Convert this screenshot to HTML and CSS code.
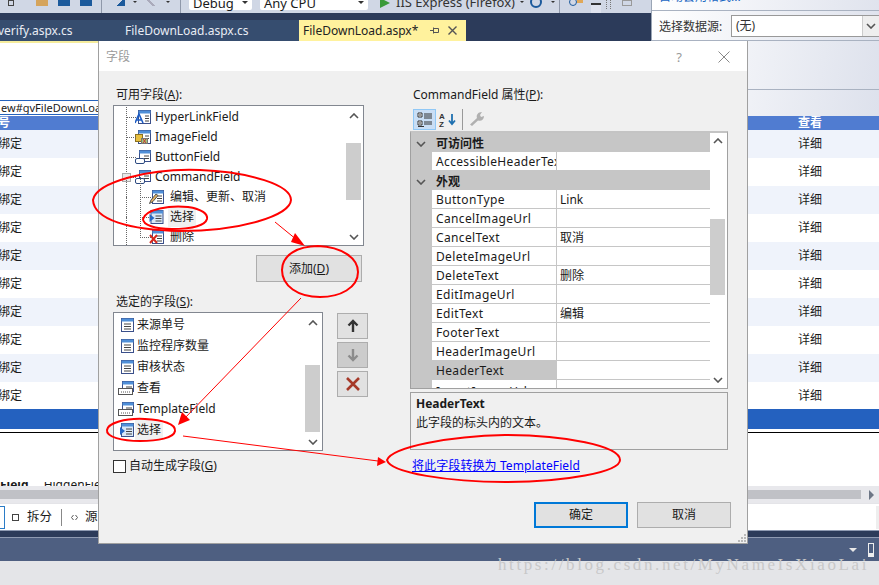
FILE: index.html
```html
<!DOCTYPE html>
<html lang="zh">
<head>
<meta charset="utf-8">
<title>字段</title>
<link rel="stylesheet" href="styles.css">
</head>
<body>
<svg class="defs" width="0" height="0">
  <defs>
    <symbol id="doc" viewBox="0 0 14 14"><rect x="1.5" y="0.5" width="12" height="13" fill="#fff" stroke="#3a4f8a"/><rect x="1.5" y="0.5" width="12" height="3" fill="#4f8fd8"/><path d="M4 6h7M4 8.5h7M4 11h7" stroke="#444"/></symbol>
    <symbol id="link" viewBox="0 0 16 14"><rect x="3.5" y="0.5" width="12" height="13" fill="#fff" stroke="#3a4f8a"/><rect x="3.5" y="0.5" width="12" height="3" fill="#4f8fd8"/><path d="M10 6h4M10 8.5h4M10 11h4" stroke="#444"/><path d="M0 13 4 4l4 9M2 10h4" fill="none" stroke="#1c5cc4" stroke-width="1.6"/></symbol>
    <symbol id="image" viewBox="0 0 16 14"><rect x="3.5" y="0.5" width="12" height="13" fill="#fff" stroke="#3a4f8a"/><rect x="3.5" y="0.5" width="12" height="3" fill="#4f8fd8"/><path d="M10 6h4M10 8.5h4" stroke="#444"/><rect x="0.5" y="4.5" width="7" height="7" fill="#e8c040" stroke="#8a7020"/><rect x="6.5" y="8.5" width="6" height="5" fill="#9fc77a" stroke="#777"/><path d="m8 9 3 4m0-4-3 4" stroke="#c33"/></symbol>
    <symbol id="btn" viewBox="0 0 16 14"><rect x="4.5" y="0.5" width="11" height="11" fill="#fff" stroke="#3a4f8a"/><rect x="4.5" y="0.5" width="11" height="3" fill="#4f8fd8"/><path d="M9 6h5M9 8.5h5" stroke="#444"/><rect x="0.5" y="8.5" width="9" height="5" rx="1.5" fill="#fff" stroke="#2c4a80"/></symbol>
    <symbol id="edit" viewBox="0 0 15 14"><rect x="3.5" y="0.5" width="11" height="13" fill="#fff" stroke="#3a4f8a"/><rect x="3.5" y="0.5" width="11" height="3" fill="#4f8fd8"/><path d="M8 6h5M8 8.5h5M8 11h5" stroke="#444"/><path d="M0.5 13.5 2 10l5-6 2 1.500-5 6z" fill="#e0b060" stroke="#555"/></symbol>
    <symbol id="sel" viewBox="0 0 14 14"><rect x="1.500" y="0.5" width="12" height="13" fill="#d8e8f8" stroke="#3a4f8a"/><rect x="1.500" y="0.5" width="12" height="3" fill="#4f8fd8"/><path d="M6 6h6M6 8.500h6M6 11h6" stroke="#444"/><path d="M0 4v8l5-4z" fill="#2468c8"/></symbol>
    <symbol id="del" viewBox="0 0 15 14"><rect x="3.500" y="0.5" width="11" height="13" fill="#fff" stroke="#3a4f8a"/><rect x="3.500" y="0.5" width="11" height="3" fill="#4f8fd8"/><path d="M8 6h5M8 8.500h5M8 11h5" stroke="#444"/><path d="m1 5 7 8m0-8-7 8" stroke="#d8281c" stroke-width="2"/></symbol>
    <symbol id="tpl" viewBox="0 0 16 14"><rect x="4.500" y="0.5" width="11" height="10" fill="#fff" stroke="#3a4f8a"/><rect x="4.500" y="0.5" width="11" height="3" fill="#4f8fd8"/><path d="M8 6h6" stroke="#444"/><rect x="0.5" y="7.500" width="14" height="6" fill="#fff" stroke="#555"/><path d="M3 11h1m1 0h1m1 0h1m1 0h1m1 0h1" stroke="#555"/></symbol>
    <symbol id="up" viewBox="0 0 10 6"><path d="m1 5 4-4 4 4" fill="none" stroke="#555" stroke-width="1.600"/></symbol>
    <symbol id="down" viewBox="0 0 10 6"><path d="m1 1 4 4 4-4" fill="none" stroke="#555" stroke-width="1.600"/></symbol>
  </defs>
</svg>

<div class="ide">
  <header class="toolbar">
    <span class="t-box"></span>
    <span class="t-folder"></span>
    <span class="t-save"></span>
    <span class="t-save t-save2"></span>
    <span class="t-sep"></span>
    <span class="t-arrow"></span>
    <span class="t-caret"></span>
    <span class="t-gray"></span>
    <span class="t-caret"></span>
    <span class="t-sep t-sep2"></span>
    <span class="t-combo t-debug">Debug<i></i></span>
    <span class="t-combo t-cpu">Any CPU<i></i></span>
    <span class="t-play"></span>
    <span class="t-run">IIS Express (Firefox)</span>
    <span class="t-caret t-caret2"></span>
    <span class="t-refresh"></span>
    <span class="t-caret t-caret3"></span>
    <span class="t-sep t-sep3"></span>
    <span class="t-find"></span>
    <span class="t-orange"></span>
    <span class="t-more"></span>
    <span class="t-dots"></span>
    <span class="t-grid"></span>
  </header>
  <nav class="tabs">
    <div class="tab tab-a">verify.aspx.cs</div>
    <div class="tab tab-b">FileDownLoad.aspx.cs</div>
    <div class="tab tab-active">FileDownLoad.aspx*<svg class="tab-pin" width="9" height="9" viewBox="0 0 9 9"><path d="M0 4.500h3M3.500 1.500v6M3.500 2.500h5M3.500 6.500h5M8.500 2.500v4" fill="none" stroke="#555"/></svg><svg class="tab-x" width="9" height="9" viewBox="0 0 9 9"><path d="m.5.5 8 8m0-8-8 8" stroke="#555" stroke-width="1.400"/></svg></div>
  </nav>
  <main class="design">
    <div class="crumb">ew#gvFileDownLoad</div>
    <div class="gv">
      <div class="gv-head"><span class="c1">号</span><span class="c2">查看</span></div>
      <div class="gv-row alt"><span class="c1">绑定</span><span class="c2">详细</span></div>
      <div class="gv-row"><span class="c1">绑定</span><span class="c2">详细</span></div>
      <div class="gv-row alt"><span class="c1">绑定</span><span class="c2">详细</span></div>
      <div class="gv-row"><span class="c1">绑定</span><span class="c2">详细</span></div>
      <div class="gv-row alt"><span class="c1">绑定</span><span class="c2">详细</span></div>
      <div class="gv-row"><span class="c1">绑定</span><span class="c2">详细</span></div>
      <div class="gv-row alt"><span class="c1">绑定</span><span class="c2">详细</span></div>
      <div class="gv-row"><span class="c1">绑定</span><span class="c2">详细</span></div>
      <div class="gv-row alt"><span class="c1">绑定</span><span class="c2">详细</span></div>
      <div class="gv-row"><span class="c1">绑定</span><span class="c2">详细</span></div>
      <div class="gv-sel"></div>
    </div>
    <div class="gv-rule"></div>
    <div class="fields"><b>Field</b> HiddenField</div>
  </main>
  <div class="hscroll"><div class="hthumb"></div><span class="harrow"></span></div>
  <div class="viewbar">
    <span class="v-design"></span>
    <span class="v-icon"></span><span class="v-text">拆分</span>
    <span class="v-sep"></span>
    <svg class="v-code" width="7" height="7" viewBox="0 0 7 7"><path d="M2.500 1 .5 3.500l2 2.500M4.500 1l2 2.500-2 2.500" fill="none" stroke="#555"/></svg><span class="v-text">源</span>
    <span class="v-end"></span>
  </div>
  <div class="darkline"></div>
  <div class="panelbar"><span class="p-caret"></span><span class="p-pin"></span></div>
  <div class="wmstrip"></div>
</div>

<aside class="smart">
  <div class="smart-top"><span class="smart-link">自动套用格式...</span></div>
  <div class="smart-row"><span class="smart-label">选择数据源:</span><div class="smart-combo"><span>(无)</span><span class="smart-btn"><svg width="10" height="6"><use href="#down"/></svg></span></div></div>
  <div class="smart-rest"></div>
</aside>

<section class="dialog">
  <div class="dlg-title"><span>字段</span><span class="dlg-help">?</span><svg class="dlg-x" width="12" height="12" viewBox="0 0 12 12"><path d="m.5.5 11 11m0-11-11 11" stroke="#888" fill="none"/></svg></div>
  <div class="dlg-body">
    <div class="col-left">
      <label class="lbl">可用字段(<u>A</u>):</label>
      <div class="listbox avail">
        <div class="tree">
          <div class="node"><svg class="ic" width="16" height="14"><use href="#link"/></svg>HyperLinkField</div>
          <div class="node"><svg class="ic" width="16" height="14"><use href="#image"/></svg>ImageField</div>
          <div class="node"><svg class="ic" width="16" height="14"><use href="#btn"/></svg>ButtonField</div>
          <div class="node open"><span class="minus"></span><svg class="ic" width="16" height="14"><use href="#btn"/></svg>CommandField</div>
          <div class="node child"><svg class="ic" width="15" height="14"><use href="#edit"/></svg>编辑、更新、取消</div>
          <div class="node child"><svg class="ic" width="15" height="14"><use href="#sel"/></svg><span class="hl">选择</span></div>
          <div class="node child"><svg class="ic" width="15" height="14"><use href="#del"/></svg>删除</div>
        </div>
        <div class="sb"><svg width="10" height="6"><use href="#up"/></svg><div class="sb-track"><div class="sb-thumb t1"></div></div><svg width="10" height="6"><use href="#down"/></svg></div>
      </div>
      <button class="btn add">添加(<u>D</u>)</button>
      <label class="lbl lbl2">选定的字段(<u>S</u>):</label>
      <div class="sel-wrap">
        <div class="listbox chosen">
          <div class="items">
            <div class="item"><svg width="14" height="14"><use href="#doc"/></svg>来源单号</div>
            <div class="item"><svg width="14" height="14"><use href="#doc"/></svg>监控程序数量</div>
            <div class="item"><svg width="14" height="14"><use href="#doc"/></svg>审核状态</div>
            <div class="item"><svg class="wide" width="16" height="14"><use href="#tpl"/></svg>查看</div>
            <div class="item"><svg class="wide" width="16" height="14"><use href="#tpl"/></svg>TemplateField</div>
            <div class="item"><svg width="14" height="14"><use href="#sel"/></svg><span class="hl">选择</span></div>
          </div>
          <div class="sb"><svg width="10" height="6"><use href="#up"/></svg><div class="sb-track"><div class="sb-thumb t2"></div></div><svg width="10" height="6"><use href="#down"/></svg></div>
        </div>
        <div class="side">
          <button class="sq"><svg width="12" height="14" viewBox="0 0 12 14"><path d="M6 13V2M1.500 6.500 6 2l4.500 4.500" fill="none" stroke="#333" stroke-width="2.400"/></svg></button>
          <button class="sq off"><svg width="12" height="14" viewBox="0 0 12 14"><path d="M6 1v11M1.500 7.500 6 12l4.500-4.500" fill="none" stroke="#8c8c8c" stroke-width="2.400"/></svg></button>
          <button class="sq"><svg width="14" height="14" viewBox="0 0 14 14"><path d="m1 1 12 12m0-12L1 13" stroke="#a63a2a" stroke-width="2.600"/></svg></button>
        </div>
      </div>
      <label class="check"><span class="box"></span>自动生成字段(<u>G</u>)</label>
    </div>
    <div class="col-right">
      <label class="lbl rlbl">CommandField 属性(<u>P</u>):</label>
      <div class="pg-tools">
        <span class="pg-on"><svg width="16" height="15" viewBox="0 0 16 15"><path d="M1 1h4v4H1zM1 9h4v4H1z" fill="#fff" stroke="#333"/><path d="M2 3h2M2 11h2" stroke="#333"/><path d="M7 2h8M7 4h8M7 6h8M7 10h8M7 12h8M1 14.500h6" stroke="#333"/></svg></span>
        <span class="pg-az"><svg width="18" height="15" viewBox="0 0 18 15"><text x="0" y="7" class="az">A</text><text x="0" y="14.500" class="az">Z</text><path d="M13 2v10M10 8.500l3 3.500 3-3.500" fill="none" stroke="#1e70b0" stroke-width="1.800"/></svg></span>
        <span class="pg-sep"></span>
        <svg width="16" height="16" viewBox="0 0 16 16"><path d="M1 13.500 8 7c-1-3 1-6 5-6l-2 3 1 2 3-1c0 4-3 5.500-6 4.500L3 15z" fill="#b0b0b0"/></svg>
      </div>
      <div class="pg">
        <div class="pg-list">
          <div class="pg-cat"><svg width="10" height="6"><use href="#down"/></svg><span>可访问性</span></div>
          <div class="pg-row"><span class="n">AccessibleHeaderText</span><span class="v"></span></div>
          <div class="pg-cat"><svg width="10" height="6"><use href="#down"/></svg><span>外观</span></div>
          <div class="pg-row"><span class="n">ButtonType</span><span class="v">Link</span></div>
          <div class="pg-row"><span class="n">CancelImageUrl</span><span class="v"></span></div>
          <div class="pg-row"><span class="n">CancelText</span><span class="v">取消</span></div>
          <div class="pg-row"><span class="n">DeleteImageUrl</span><span class="v"></span></div>
          <div class="pg-row"><span class="n">DeleteText</span><span class="v">删除</span></div>
          <div class="pg-row"><span class="n">EditImageUrl</span><span class="v"></span></div>
          <div class="pg-row"><span class="n">EditText</span><span class="v">编辑</span></div>
          <div class="pg-row"><span class="n">FooterText</span><span class="v"></span></div>
          <div class="pg-row"><span class="n">HeaderImageUrl</span><span class="v"></span></div>
          <div class="pg-row cur"><span class="n">HeaderText</span><span class="v"></span></div>
          <div class="pg-row last"><span class="n">InsertImageUrl</span><span class="v"></span></div>
        </div>
        <div class="sb pg-sb"><svg width="10" height="6"><use href="#up"/></svg><div class="sb-track"><div class="sb-thumb t3"></div></div><svg width="10" height="6"><use href="#down"/></svg></div>
      </div>
      <div class="help"><b>HeaderText</b><span>此字段的标头内的文本。</span></div>
      <a class="conv" href="#">将此字段转换为 TemplateField</a>
      <div class="actions">
        <button class="btn ok">确定</button>
        <button class="btn cancel">取消</button>
      </div>
    </div>
  </div>
  <svg class="grip" width="8" height="8" viewBox="0 0 8 8"><path d="M6 0h2v2H6zM3 3h2v2H3zM6 3h2v2H6zM0 6h2v2H0zM3 6h2v2H3zM6 6h2v2H6z" fill="#b8b8b8"/></svg>
</section>

<svg class="marks" width="879" height="585" viewBox="0 0 879 585">
  <g fill="none" stroke="#f00" stroke-width="2">
    <path d="M93 200C96 182 150 168 200 170C250 172 291 185 291 200C290 216 240 231 180 231C130 230 94 220 93 200Z"/>
    <path d="M143 219C146 209 170 205 188 207C202 209 208 214 207 219C205 226 190 229 172 229C155 229 143 225 143 219Z"/>
    <path d="M282 270C282 255 298 246 318 246C342 247 358 258 358 272C358 288 340 297 320 297C298 297 282 286 282 270Z"/>
    <path d="M107 430C108 423 125 418 145 419C163 420 176 424 175 431C174 438 158 441 140 441C122 441 106 437 107 430Z"/>
    <path d="M387 460C392 447 450 436 505 435C565 435 620 446 620 460C620 472 565 482 505 482C450 482 390 473 387 460Z"/>
  </g>
  <g fill="none" stroke="#f00" stroke-width="1">
    <path d="M275 222 297 240"/>
    <path d="M301 298 183 420"/>
    <path d="M183 436 378 461"/>
  </g>
  <g fill="#f00">
    <path d="M305 246 295 233 291 242Z"/>
    <path d="M178 425 190 420 182 412Z"/>
    <path d="M386 462 378 457 377 466Z"/>
  </g>
</svg>
<div class="wm">https://blog.csdn.net/MyNameIsXiaoLai</div>
</body>
</html>
```
FILE: styles.css
```css
* { box-sizing: border-box; }
html, body { margin: 0; padding: 0; }
body { width: 879px; height: 585px; position: relative; overflow: hidden; font: 12px/16px "Noto Sans", "Noto Sans CJK SC", sans-serif; color: #1a1a1a; background: #fff; }
.defs { position: absolute; }
.ide { display: flex; flex-direction: column; height: 585px; }

.toolbar { height: 13px; background: #d0d7e5; display: flex; align-items: flex-start; overflow: hidden; position: relative; flex: none; padding-left: 8px; }
.t-box { width: 6px; height: 6px; border: 1px solid #444; margin-right: 22px; }
.t-folder { width: 12px; height: 6px; background: #d5a45c; margin-right: 10px; }
.t-save { width: 12px; height: 6px; background: #1c5a9c; margin-right: 10px; }
.t-save2 { margin-right: 9px; }
.t-sep { width: 1px; height: 13px; background: #8f98aa; margin-right: 11px; }
.t-arrow { width: 12px; height: 6px; background: linear-gradient(135deg, transparent 50%, #1c5a9c 50%); margin-right: 8px; }
.t-caret { width: 0; height: 0; border: 2.500px solid transparent; border-top-color: #333; margin: 1px 9px 0 0; }
.t-gray { width: 10px; height: 6px; background: linear-gradient(45deg, transparent 40%, #aab 40%, #aab 60%, transparent 60%); margin-right: 10px; }
.t-sep2 { margin-right: 8px; margin-left: 1px; }
.t-combo { height: 10px; background: #fff; border-radius: 0 0 2px 2px; padding-left: 4px; line-height: 6px; font-size: 13px; display: flex; justify-content: space-between; position: relative; }
.t-combo i { width: 0; height: 0; border: 3px solid transparent; border-top-color: #333; margin: 1px 4px 0 0; }
.t-debug { width: 63px; margin-right: 8px; }
.t-cpu { width: 108px; margin-right: 12px; }
.t-play { width: 0; height: 0; border-left: 10px solid #3a9a3a; border-top: 5px solid transparent; border-bottom: 5px solid transparent; margin-right: 6px; margin-top: -2px; }
.t-run { font-size: 13px; line-height: 4px; width: 121px; color: #333; }
.t-caret2 { margin-left: 3px; margin-right: 6px; }
.t-refresh { width: 12px; height: 12px; border-radius: 50%; border: 2px solid #1c5a9c; margin: -4px 9px 0 0; }
.t-caret3 { margin-right: 4px; }
.t-sep3 { margin-right: 9px; }
.t-find { width: 8px; height: 8px; border: 1.500px solid #1c5a9c; border-radius: 50%; margin-top: -2px; }
.t-orange { width: 6px; height: 3px; background: #e0a858; margin-right: 8px; }
.t-more { width: 10px; height: 13px; border-top: 2px solid #333; margin: 3px 5px 0 0; position: relative; background: #dfe3ee; }
.t-dots { width: 5px; height: 9px; border-left: 1px dotted #777; margin-right: 11px; border-right: 1px dotted #777; }
.t-grid { width: 10px; height: 6px; border: 1px solid #999; }

.tabs { height: 28px; background: #2c3b5a; display: flex; padding-top: 7px; color: #e8ecf4; flex: none; }
.tab { height: 21px; line-height: 21px; }
.tab-a { width: 125px; background: #364d6f; text-indent: -2px; white-space: nowrap; }
.tab-b { width: 174px; background: #364d6f; }
.tab-active { width: 167px; background: #fff29d; color: #222; padding-left: 4px; display: flex; align-items: center; white-space: nowrap; }
.tab-pin { margin-left: 12px; flex: none; }
.tab-x { margin-left: 9px; flex: none; }

.design { flex: none; height: 445px; background: #fff; border-top: 2px solid #f5ec9c; padding-top: 58px; position: relative; overflow: hidden; }
.crumb { position: absolute; left: 0; top: 57px; width: 100px; height: 15px; border: 1px solid #2563bc; border-left: 0; background: #fff; line-height: 13px; font-size: 11px; padding-left: 1px; white-space: nowrap; overflow: hidden; }
.gv { margin-top: 15px; }
.gv-head { height: 14px; background: #507cd1; color: #fff; font-weight: 700; display: flex; line-height: 14px; overflow: hidden; }
.gv-row { height: 28px; background: #fff; display: flex; align-items: center; }
.alt { background: #eff3fb; }
.c1 { width: 800px; margin-left: -2px; flex: none; }
.gv-sel { height: 20px; background: #2461bf; margin-top: -1px; }
.gv-rule { height: 1px; background: #000; margin-top: 3px; }
.fields { margin-top: 49px; height: 6px; line-height: 0; white-space: nowrap; padding-top: 3px; overflow: hidden; }
.fields b { margin-right: 12px; }

.hscroll { height: 17px; background: #e8e8ec; flex: none; display: flex; align-items: center; padding-right: 13px; }
.hthumb { height: 9px; background: #c0c1c6; flex: 1; }
.harrow { width: 0; height: 0; border-left: 5px solid #6d7686; border-top: 5px solid transparent; border-bottom: 5px solid transparent; margin-left: 8px; margin-right: -8px; }
.viewbar { height: 27px; background: #fff; flex: none; display: flex; align-items: center; border-top: 1px solid #e4e4e8; }
.v-design { width: 5px; height: 23px; border: 1px solid #2b7cc7; border-left: 0; margin-right: 7px; }
.v-icon { width: 7px; height: 7px; border: 1px solid #444; margin-right: 8px; }
.v-text { font-size: 12.500px; }
.v-sep { width: 1px; height: 17px; background: #888; margin: 0 9px; }
.v-code { margin-right: 7px; flex: none; }
.v-end { width: 3px; height: 23px; background: #eee; margin-left: auto; }
.darkline { height: 8px; background: #2c3b5a; border-top: 1px solid #8e9ab2; border-bottom: 1px solid #8e9ab2; flex: none; }
.panelbar { height: 23px; background: #4e5f81; flex: none; display: flex; justify-content: flex-end; align-items: center; padding-right: 5px; }
.p-caret { width: 0; height: 0; border: 4px solid transparent; border-top-color: #e8e8e8; margin: 4px 11px 0 0; }
.p-pin { width: 6px; height: 14px; border: 1.500px solid #eee; border-bottom-width: 4px; }
.wmstrip { flex: 1; background: #e4e5e8; }

.smart { position: absolute; left: 651px; top: 0; width: 228px; height: 116px; background: linear-gradient(100deg, #fff, #dde1ec); border-left: 1px solid #9aa5b5; overflow: hidden; }
.smart-top { height: 11px; border-bottom: 1px solid #a9b2c1; line-height: 0; padding-left: 7px; color: #1a66c2; }
.smart-link { position: relative; top: -3px; display: block; line-height: 0; }
.smart-row { height: 30px; display: flex; align-items: center; padding-left: 7px; border-bottom: 1px solid #a9b2c1; color: #333; }
.smart-label { width: 72px; flex: none; white-space: nowrap; padding-top: 2px; }
.smart-combo { width: 149px; height: 22px; background: #fff; border: 1px solid #999; display: flex; justify-content: space-between; align-items: center; padding-left: 4px; flex: none; }
.smart-btn { width: 17px; height: 20px; background: #eee; border-left: 1px solid #ccc; display: flex; align-items: center; justify-content: center; }
.smart-rest { height: 49px; border-bottom: 1px solid #a9b2c1; }

.dialog { position: absolute; left: 98px; top: 41px; width: 650px; height: 503px; background: #f0f0f0; border: 1px solid #a0a0a0; border-top: 0; display: flex; flex-direction: column; }
.dlg-title { height: 30px; background: #fff; flex: none; display: flex; align-items: center; padding: 2px 0 0 7px; color: #9a9a9a; }
.dlg-help { margin-left: auto; margin-right: 36px; font-size: 13px; color: #999; }
.dlg-x { margin-right: 17px; }
.dlg-body { display: flex; padding: 15px 0 0 14px; flex: 1; }
.col-left { width: 297px; flex: none; display: flex; flex-direction: column; }
.col-right { width: 321px; flex: none; display: flex; flex-direction: column; }
.lbl { height: 19px; line-height: 16px; padding: 1px 0 0 3px; display: block; flex: none; }
.listbox { background: #fff; border: 1px solid #828790; display: flex; flex: none; }
.avail { width: 251px; height: 141px; overflow: hidden; }
.tree { flex: 1; overflow: hidden; padding: 1px 0 0 21px; }
.node { height: 20px; line-height: 20px; display: flex; align-items: center; position: relative; white-space: nowrap; }
.node::before { content: ""; position: absolute; left: -9px; top: -10px; width: 9px; border-left: 1px dotted #666; border-bottom: 1px dotted #666; height: 20px; }
.ic { margin-right: 4px; flex: none; }
.child { padding-left: 14px; }
.child .ic { margin-right: 6px; }
.child::before { left: 5px; width: 10px; }
.child::after { content: ""; position: absolute; left: -9px; top: -10px; height: 30px; border-left: 1px dotted #666; }
.minus { position: absolute; left: -13px; top: 6px; width: 9px; height: 9px; background: #e8e8e8; border: 1px solid #aaa; }
.hl { background: #f0f0f0; padding: 2px; line-height: 16px; margin-left: -2px; }
.sb { width: 15px; margin: 2px 2px 2px 0; display: flex; flex-direction: column; align-items: center; flex: none; padding: 5px 0 3px; }
.sb-track { flex: 1; width: 15px; }
.sb-thumb { background: #cdcdcd; width: 15px; }
.t1 { margin-top: 24px; height: 57px; }
.t2 { margin-top: 39px; height: 67px; }
.t3 { margin-top: 75px; height: 76px; }
.btn { background: #e1e1e1; border: 1px solid #adadad; font: inherit; color: #1a1a1a; padding: 0; }
.add { width: 106px; height: 27px; margin: 9px 0 0 143px; flex: none; }
.lbl2 { margin-top: 14px; height: 16px; line-height: 12px; padding-top: 0; }
.sel-wrap { display: flex; flex: none; }
.chosen { width: 210px; height: 139px; overflow: hidden; }
.items { flex: 1; padding-top: 1px; }
.item { height: 21px; display: flex; align-items: center; padding-left: 6px; white-space: nowrap; }
.item svg { margin-right: 3px; flex: none; }
.item svg.wide { margin-left: -2px; margin-right: 3px; }
.side { margin-left: 14px; display: flex; flex-direction: column; gap: 3px; padding-top: 1px; }
.sq { width: 31px; height: 26px; background: #e1e1e1; border: 1px solid #adadad; padding: 0; display: flex; align-items: center; justify-content: center; }
.off { background: #ccc; }
.check { display: flex; align-items: center; height: 16px; margin-top: 7px; }
.box { width: 13px; height: 13px; border: 1px solid #333; background: #fff; margin-right: 3px; }
.rlbl { height: 22px; }
.pg-tools { display: flex; align-items: center; height: 24px; margin-top: -1px; padding-left: 3px; flex: none; }
.pg-on { width: 23px; height: 21px; background: #c9def5; border: 1px solid #90c8f6; display: flex; align-items: center; justify-content: center; margin-right: 3px; }
.pg-az { display: flex; margin-right: 5px; }
.az { font: 700 8px "Liberation Sans", sans-serif; fill: #333; }
.pg-sep { width: 1px; height: 21px; background: #999; margin-right: 6px; }
.pg { width: 318px; height: 258px; border: 1px solid #a0a0a0; background: #fff; border-top-width: 2px; border-top-color: #c4c4c4; display: flex; flex: none; overflow: hidden; }
.pg-list { width: 299px; flex: none; }
.pg-cat { height: 19px; background: #c6c6c6; display: flex; align-items: center; font-weight: 700; padding-top: 2px; }
.pg-cat svg { margin: 0 10px 0 5px; flex: none; }
.pg-row { height: 19px; display: flex; border-left: 21px solid #c6c6c6; border-bottom: 1px solid #c6c6c6; line-height: 20px; }
.pg-row.last { border-left-color: #c6c6c6; line-height: 24px; }
.n { width: 125px; padding: 0 1px 0 4px; border-right: 1px solid #c6c6c6; white-space: nowrap; overflow: hidden; flex: none; letter-spacing: .35px; }
.v { padding-left: 3px; }
.cur .n { background: #c6c6c6; }
.pg-sb { margin: 3px 0 2px 0; width: 17px; padding-top: 2px; align-items: flex-start; }
.pg-sb svg { margin-left: 3px; }
.help { width: 318px; height: 58px; margin-top: 3px; border: 1px solid #a0a0a0; padding: 3px 5px; display: flex; flex-direction: column; gap: 3px; flex: none; }
.conv { color: #0000ff; margin: 8px 0 0 2px; height: 16px; flex: none; text-decoration: underline; letter-spacing: .1px; }
.actions { display: flex; gap: 9px; margin: 28px 0 0 124px; flex: none; }
.ok { width: 94px; height: 26px; border: 2px solid #0078d7; flex: none; }
.cancel { width: 94px; height: 26px; flex: none; }
.grip { position: absolute; right: 1px; bottom: 1px; }

.marks { position: absolute; left: 0; top: 0; pointer-events: none; }
.wm { position: absolute; left: 498px; top: 555px; font: 17px/20px "Liberation Serif", serif; letter-spacing: 2.600px; color: #c8c8c8; white-space: nowrap; }
```
